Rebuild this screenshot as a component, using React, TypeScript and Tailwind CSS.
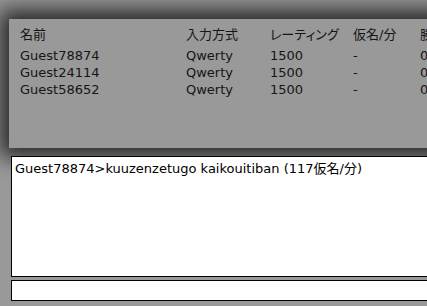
const players = [
  { name: "Guest78874", input: "Qwerty", rating: 1500, kpm: "-", win: "0" },
  { name: "Guest24114", input: "Qwerty", rating: 1500, kpm: "-", win: "0" },
  { name: "Guest58652", input: "Qwerty", rating: 1500, kpm: "-", win: "0" },
];

function Row({ cells, header }: { cells: (string | number)[]; header?: boolean }) {
  return (
    <div className={header ? "flex h-[18px] leading-[18px] mb-[3px]" : "flex h-[17px] leading-[17px]"}>
      <div className="w-[166px] shrink-0">{cells[0]}</div>
      <div className="w-[84px] shrink-0">{cells[1]}</div>
      <div className="w-[83px] shrink-0 [font-feature-settings:'palt']">{cells[2]}</div>
      <div className="w-[67px] shrink-0">{cells[3]}</div>
      <div className="shrink-0 whitespace-nowrap">{cells[4]}</div>
    </div>
  );
}

export default function App() {
  return (
    <div
      className="w-[427px] h-[306px] overflow-hidden bg-[#999999] flex flex-col text-[13px] text-[#151515]"
      style={{ fontFamily: '"DejaVu Sans", "Noto Sans CJK JP", sans-serif' }}
    >
      <section className="ml-[9px] mt-[19px] h-[129px] w-[440px] shrink-0 bg-[#999999] pl-[11px] pt-[7px] shadow-[0_0_20px_9px_rgba(0,0,0,0.75)]">
        <Row header cells={["名前", "入力方式", "レーティング", "仮名/分", "勝率"]} />
        {players.map((p) => (
          <Row key={p.name} cells={[p.name, p.input, p.rating, p.kpm, p.win]} />
        ))}
      </section>

      <div className="relative z-10 ml-[11px] mt-[8px] h-[121px] shrink-0 border border-black border-r-0 bg-white pl-[3px] pt-[3px] leading-[17px] text-black">
        Guest78874&gt;kuuzenzetugo kaikouitiban (117仮名/分)
      </div>

      <input
        className="relative z-10 ml-[11px] mt-[3px] h-[21px] shrink-0 border border-black border-r-0 bg-white outline-none"
        readOnly
      />
    </div>
  );
}
